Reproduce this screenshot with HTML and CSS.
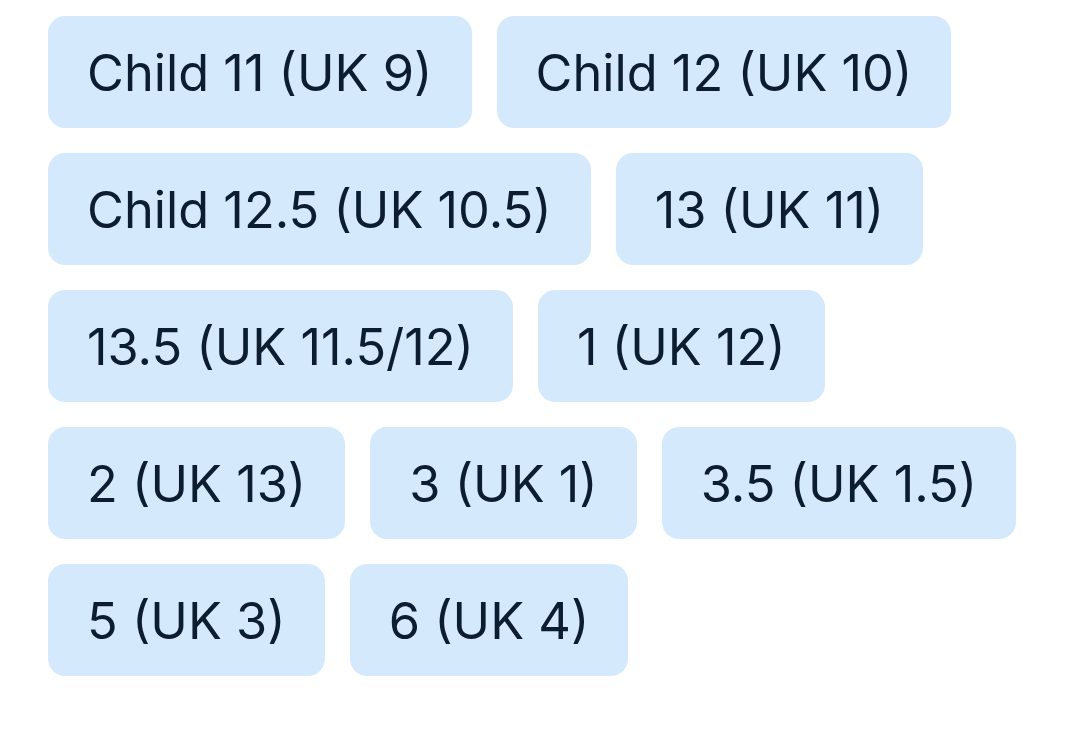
FILE: index.html
```html
<!DOCTYPE html>
<html>
<head>
<meta charset="utf-8">
<link rel="stylesheet" href="styles.css">
</head>
<body>
<div class="chips">
  <span class="chip">Child 11 (UK 9)</span>
  <span class="chip">Child 12 (UK 10)</span>
  <span class="chip">Child 12.5 (UK 10.5)</span>
  <span class="chip">13 (UK 11)</span>
  <span class="chip">13.5 (UK 11.5/12)</span>
  <span class="chip">1 (UK 12)</span>
  <span class="chip">2 (UK 13)</span>
  <span class="chip">3 (UK 1)</span>
  <span class="chip">3.5 (UK 1.5)</span>
  <span class="chip">5 (UK 3)</span>
  <span class="chip">6 (UK 4)</span>
</div>
</body>
</html>
```
FILE: styles.css
```css
html, body {
  margin: 0;
  padding: 0;
  background: #ffffff;
}
.chips {
  display: flex;
  flex-wrap: wrap;
  gap: 25px;
  padding: 16px 20px 16px 48px;
  width: 1065px;
  box-sizing: border-box;
}
.chip {
  display: flex;
  align-items: center;
  height: 112px;
  box-sizing: border-box;
  padding: 0 39px;
  background: #d4eafc;
  border-radius: 17px;
  color: #0b1d2e;
  font-family: "Inter", "Noto Sans", sans-serif;
  font-size: 50.5px;
  white-space: nowrap;
}
```
